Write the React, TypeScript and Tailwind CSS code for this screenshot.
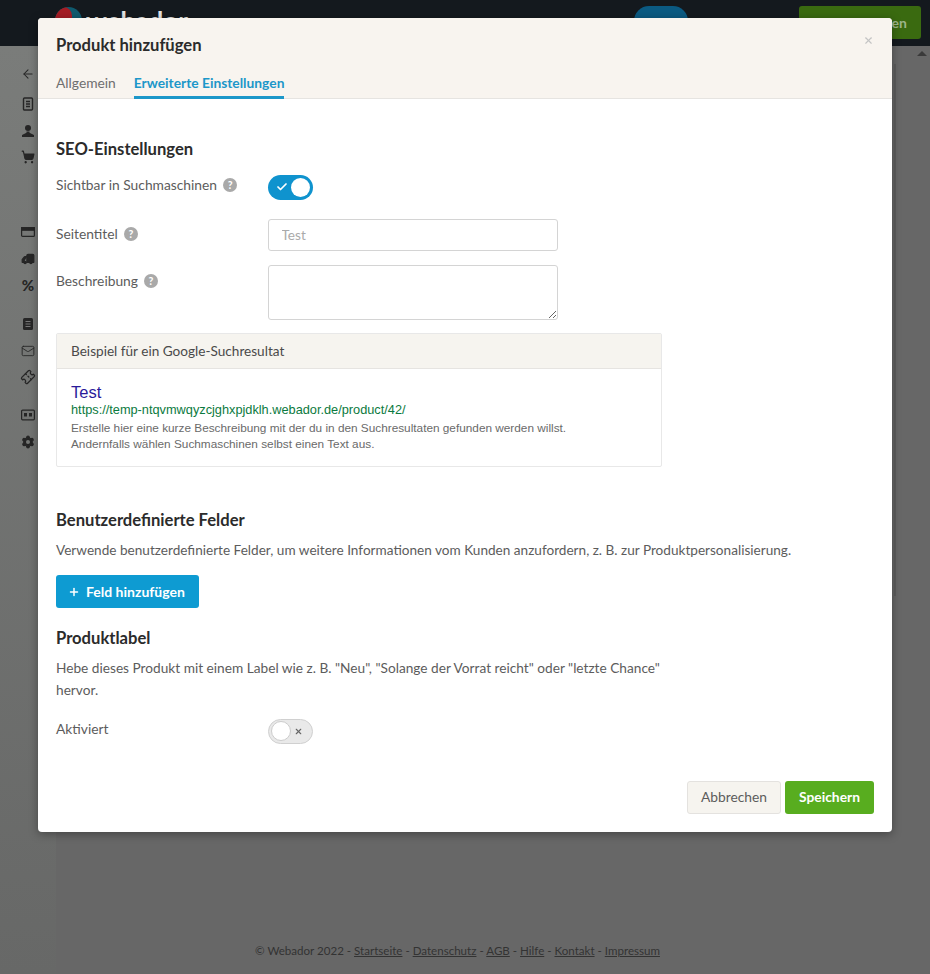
import React from "react";
import { ArrowLeft, Check, Mail, Plus, Settings, ShoppingCart, Ticket, Truck, X } from "lucide-react";

const sidebarGroups = [
  { className: "mt-[21px]", icons: ["arrow"] },
  { className: "mt-[16px] gap-[12.5px]", icons: ["doc", "user", "cart"] },
  { className: "mt-[61px] gap-[12.5px]", icons: ["card", "truck", "percent"] },
  { className: "mt-[25px] gap-[12.5px]", icons: ["docFilled", "mail", "tag"] },
  { className: "mt-[24px] gap-[12.5px]", icons: ["id", "gear"] },
];

const SidebarIcon = ({ name }: { name: string }) => {
  const cls = "w-[14px] h-[14px] text-[#262626]";
  switch (name) {
    case "arrow":
      return <ArrowLeft className={cls} strokeWidth={1.8} />;
    case "doc":
      return (
        <svg viewBox="0 0 14 14" className={cls} fill="none" stroke="currentColor" strokeWidth="1.4">
          <rect x="2.5" y="1" width="9" height="12" rx="1" />
          <path d="M5 4.5h4M5 7h4M5 9.5h4" />
        </svg>
      );
    case "user":
      return (
        <svg viewBox="0 0 14 14" className={cls} fill="currentColor">
          <circle cx="7" cy="4" r="3" />
          <path d="M5.5 7.5h3v1.2l4.5 2.3V13H1v-2l4.5-2.3z" />
        </svg>
      );
    case "cart":
      return <ShoppingCart className={cls} fill="currentColor" strokeWidth={2} />;
    case "card":
      return (
        <svg viewBox="0 0 14 14" className={cls} fill="none" stroke="currentColor" strokeWidth="1.2">
          <rect x="0.6" y="2.6" width="12.8" height="8.8" rx="1" />
          <rect x="0.6" y="2.6" width="12.8" height="2.6" fill="currentColor" />
        </svg>
      );
    case "truck":
      return <Truck className={`${cls} -scale-x-100`} fill="currentColor" strokeWidth={2} />;
    case "percent":
      return <span className="w-[14px] h-[14px] flex items-center justify-center text-[15px] leading-none font-black text-[#262626] font-['Lato',sans-serif]">%</span>;
    case "docFilled":
      return (
        <svg viewBox="0 0 14 14" className={cls}>
          <rect x="2" y="1" width="10" height="12" rx="1.5" fill="currentColor" />
          <path d="M4.5 4.5h5M4.5 7h5M4.5 9.5h5" stroke="#777" strokeWidth="1" />
        </svg>
      );
    case "mail":
      return <Mail className={cls} strokeWidth={1.5} />;
    case "tag":
      return <Ticket className={`${cls} -rotate-45`} strokeWidth={2.2} />;
    case "id":
      return (
        <svg viewBox="0 0 14 14" className={cls} fill="none" stroke="currentColor" strokeWidth="1.2">
          <rect x="0.6" y="2.2" width="12.8" height="9.6" rx="1" />
          <rect x="3" y="5" width="3" height="3.5" fill="currentColor" stroke="none" />
          <rect x="8" y="5" width="3" height="3.5" fill="currentColor" stroke="none" />
        </svg>
      );
    default:
      return (
        <Settings className={cls} fill="currentColor" strokeWidth={2}>
          <circle cx="12" cy="12" r="3.5" fill="#747674" stroke="none" />
        </Settings>
      );
  }
};

const Help = () => (
  <span className="w-[14px] h-[14px] rounded-full bg-[#a9a9a9] text-white flex items-center justify-center text-[10.5px] font-bold leading-none">?</span>
);

const FieldLabel = ({ children }: { children: React.ReactNode }) => (
  <div className="w-[211.5px] shrink-0 flex items-center gap-[6px] text-[#5c5c5c] text-[13.8px] leading-[20px]">{children}</div>
);

const SectionTitle = ({ children, className }: { children: React.ReactNode; className?: string }) => (
  <h3 className={`text-[16.6px] leading-[22px] font-bold text-[#2b2b2b] ${className ?? ""}`}>{children}</h3>
);

export default function App() {
  return (
    <div className="relative w-[930px] h-[974px] overflow-hidden bg-[#676767] font-['Lato','Noto_Sans',sans-serif]">
      {/* page behind the dialog */}
      <header className="h-[46px] bg-[#14191e] flex items-start">
        <div className="ml-[55px] mt-[7px] w-[27px] h-[27px] rounded-full bg-[#0f5a6e] overflow-hidden">
          <div className="w-[17px] h-[27px] bg-[#a51c24] rounded-full" />
        </div>
        <span className="ml-[4px] mt-[5px] text-[#e5e5e5] text-[26px] leading-[32px] font-bold">webador</span>
        <div className="ml-[446px] mt-[6px] w-[54px] h-[30px] rounded-full bg-[#0b5a82]" />
        <div className="ml-[111px] mt-[6px] w-[122px] h-[33px] rounded-[3px] bg-[#3a6a10] text-[#9db48a] text-[14px] leading-[33px] text-right pr-[14px] font-bold">
          Veröffentlichen
        </div>
      </header>
      <div className="flex h-[928px]">
        <aside className="w-[56px] pl-[21px] bg-linear-to-b from-[#7a7c7a] to-[#676867] flex flex-col">
          {sidebarGroups.map((group, i) => (
            <div key={i} className={`flex flex-col ${group.className}`}>
              {group.icons.map((icon) => (
                <SidebarIcon key={icon} name={icon} />
              ))}
            </div>
          ))}
        </aside>
        <main className="flex-1 relative">
          <div className="absolute left-[838px] top-[18px] h-[532px] w-[2px] bg-[#5c5c5c]" />
          <div className="absolute left-[861px] top-[5px] w-0 h-0 border-x-[5px] border-x-transparent border-b-[5px] border-b-[#3a3a3a]" />
          <footer className="absolute left-[199px] top-[897px] text-[11.57px] leading-[16px] text-[#333333] whitespace-nowrap">
            © Webador 2022 - <u>Startseite</u> - <u>Datenschutz</u> - <u>AGB</u> - <u>Hilfe</u> - <u>Kontakt</u> - <u>Impressum</u>
          </footer>
        </main>
      </div>

      {/* dialog */}
      <div className="absolute left-[38px] top-[18px] w-[854px] h-[814px] bg-white rounded-[4px] shadow-[0_2px_10px_rgba(0,0,0,0.35)] flex flex-col">
        <div className="relative h-[81px] shrink-0 bg-[#f8f4ef] border-b border-[#e6e4e1] rounded-t-[4px] px-[18px]">
          <h2 className="pt-[17px] text-[16.6px] leading-[20px] font-bold text-[#2b2b2b]">Produkt hinzufügen</h2>
          <X className="absolute right-[18px] top-[17px] w-[11px] h-[11px] text-[#c4c4c4]" strokeWidth={2.5} />
          <div className="mt-[18px] flex gap-[18px] text-[13.8px] leading-[20px]">
            <span className="h-[26px] text-[#6f6f6f]">Allgemein</span>
            <span className="h-[26px] text-[#1c97c9] font-bold border-b-[3px] border-[#1c97c9]">Erweiterte Einstellungen</span>
          </div>
        </div>

        <div className="flex-1 px-[18px] pt-[39px] flex flex-col">
          <SectionTitle>SEO-Einstellungen</SectionTitle>

          <div className="mt-[14px] flex items-center h-[26px]">
            <div className="-mt-[4px]">
              <FieldLabel>
                Sichtbar in Suchmaschinen <Help />
              </FieldLabel>
            </div>
            <div className="w-[45px] h-[25px] rounded-full bg-[#0f93ce] flex items-center pl-[8px] pr-[3px] justify-between">
              <Check className="w-[12px] h-[12px] text-white" strokeWidth={3.5} />
              <span className="w-[19px] h-[19px] rounded-full bg-white" />
            </div>
          </div>

          <div className="mt-[19px] flex items-center h-[32px]">
            <div className="-mt-[2px]">
              <FieldLabel>
                Seitentitel <Help />
              </FieldLabel>
            </div>
            <input
              readOnly
              placeholder="Test"
              className="w-[290px] h-[32px] border border-[#d4d4d4] rounded-[3px] px-[13px] text-[13.6px] bg-white placeholder:text-[#aaaaaa]"
            />
          </div>

          <div className="mt-[14px] flex items-start">
            <div className="pt-[6px]">
              <FieldLabel>
                Beschreibung <Help />
              </FieldLabel>
            </div>
            <textarea readOnly className="w-[290px] h-[55px] border border-[#d4d4d4] rounded-[3px] bg-white block" />
          </div>

          <div className="mt-[13px] w-[606px] h-[134px] border border-[#e8e8e8] rounded-[2px] flex flex-col">
            <div className="h-[35px] shrink-0 bg-[#f6f4ef] border-b border-[#e6e4e1] px-[14px] text-[13.6px] leading-[34px] text-[#4a4a4a]">
              Beispiel für ein Google-Suchresultat
            </div>
            <div className="px-[14px] pt-[13px] font-['Liberation_Sans',Arial,sans-serif]">
              <div className="text-[16.5px] leading-[20px] text-[#2a1a9a]">Test</div>
              <div className="text-[12.75px] leading-[16px] text-[#0b7a40]">https://temp-ntqvmwqyzcjghxpjdklh.webador.de/product/42/</div>
              <div className="mt-[2px] text-[11.8px] leading-[16px] text-[#6a6a6a]">
                Erstelle hier eine kurze Beschreibung mit der du in den Suchresultaten gefunden werden willst.
                <br />
                Andernfalls wählen Suchmaschinen selbst einen Text aus.
              </div>
            </div>
          </div>

          <SectionTitle className="mt-[42px]">Benutzerdefinierte Felder</SectionTitle>
          <p className="mt-[7px] text-[13.6px] leading-[24px] text-[#5c5c5c]">
            Verwende benutzerdefinierte Felder, um weitere Informationen vom Kunden anzufordern, z. B. zur Produktpersonalisierung.
          </p>
          <button className="mt-[13px] w-[143px] h-[33px] rounded-[3px] bg-[#0e9bd2] text-white text-[14px] font-bold flex items-center pl-[12px] gap-[6px]">
            <Plus className="w-[12px] h-[12px]" strokeWidth={3} /> Feld hinzufügen
          </button>

          <SectionTitle className="mt-[19px]">Produktlabel</SectionTitle>
          <p className="mt-[8px] w-[620px] text-[13.68px] leading-[22px] text-[#5c5c5c]">
            Hebe dieses Produkt mit einem Label wie z. B. "Neu", "Solange der Vorrat reicht" oder "letzte Chance" hervor.
          </p>
          <div className="mt-[17px] flex items-center h-[26px]">
            <div className="-mt-[4px]">
              <FieldLabel>Aktiviert</FieldLabel>
            </div>
            <div className="w-[45px] h-[25px] rounded-full bg-[#e9e9e9] border border-[#d0d0d0] flex items-center pl-[2px] pr-[9px] justify-between">
              <span className="w-[20px] h-[20px] rounded-full bg-white border border-[#cccccc]" />
              <X className="w-[9px] h-[9px] text-[#666666]" strokeWidth={3} />
            </div>
          </div>

          <div className="mt-auto mb-[18px] flex justify-end gap-[4px]">
            <button className="w-[94px] h-[33px] rounded-[3px] bg-[#f6f4ef] border border-[#e4e2df] text-[13.8px] text-[#5c5c5c]">Abbrechen</button>
            <button className="w-[89px] h-[33px] rounded-[3px] bg-[#58ad1f] text-white text-[13.8px] font-bold">Speichern</button>
          </div>
        </div>
      </div>
    </div>
  );
}
